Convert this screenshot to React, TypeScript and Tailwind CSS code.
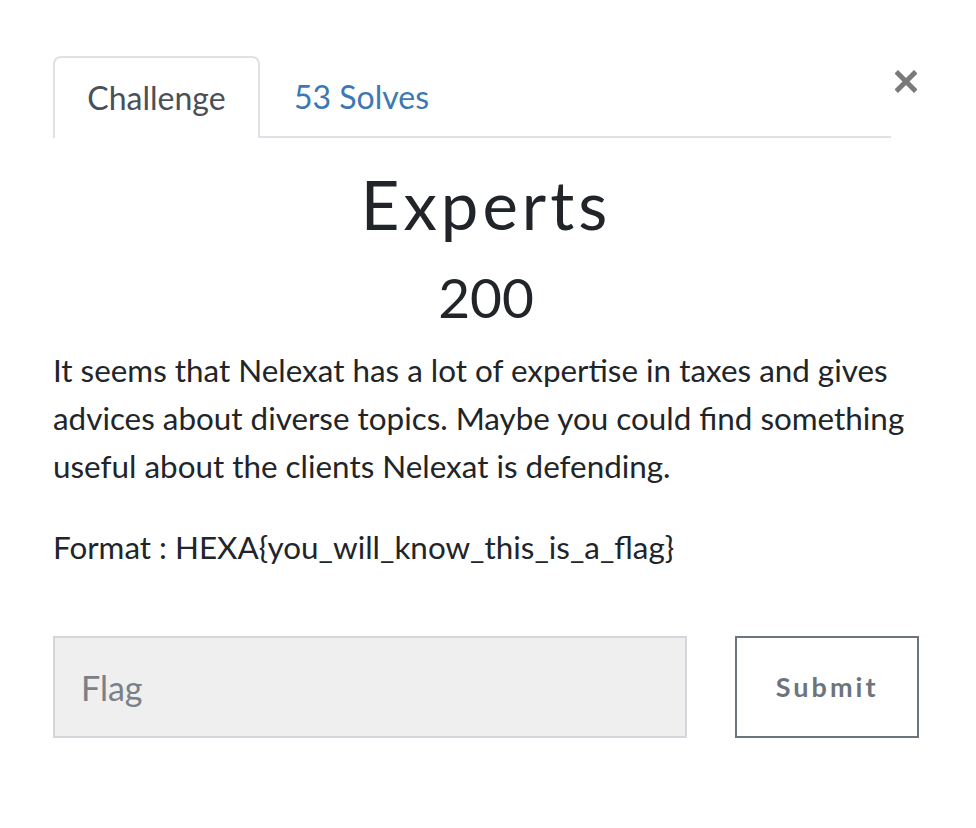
import React from "react";

export default function App() {
  return (
    <div
      className="w-[976px] h-[828px] bg-white text-[#212529]"
      style={{ fontFamily: "Lato, 'Noto Sans', sans-serif" }}
    >
      <div className="pl-[53px] pt-[56px] w-[866px] box-content">
        <div className="flex items-start">
          <div className="flex w-[838px] shrink-0 border-b-2 border-[#dee2e6] h-[82px]">
            <div className="w-[207px] h-[82px] -mb-[2px] border-2 border-b-0 border-[#dee2e6] rounded-t-[8px] bg-white flex items-center justify-center text-[32px] text-[#495057]">
              Challenge
            </div>
            <div className="px-[34px] pt-[2px] flex items-center text-[32px] text-[#3e78b2]">
              53 Solves
            </div>
          </div>
          <svg className="ml-[4px] mt-[14px] shrink-0" width="22" height="23" viewBox="0 0 22 23">
            <path d="M3 3.5 L19 19.5 M19 3.5 L3 19.5" stroke="#7a7a7a" strokeWidth="5" strokeLinecap="square" fill="none" />
          </svg>
        </div>
        <div className="text-center mt-[26px] text-[67px] leading-[80px] tracking-[4px]">
          Experts
        </div>
        <div className="text-center mt-[21px] text-[55px] leading-[64px]">200</div>
        <div className="mt-[17px] text-[31.4px] leading-[48px]">
          It seems that Nelexat has a lot of expertise in taxes and gives advices about diverse topics. Maybe you could find something useful about the clients Nelexat is defending.
        </div>
        <div className="mt-[33px] text-[31.4px] leading-[48px]">
          Format : HEXA{"{"}you_will_know_this_is_a_flag{"}"}
        </div>
        <div className="mt-[65px] flex">
          <input
            placeholder="Flag"
            className="w-[635px] h-[102px] bg-[#efefef] border-2 border-[#d3d7db] px-[26px] text-[34px] text-[#495057] placeholder:text-[#7a8087] outline-none"
          />
          <button className="ml-[48px] w-[184px] h-[102px] border-2 border-[#6c757d] bg-white text-[#6c757d] text-[27px] font-bold tracking-[3px]">
            Submit
          </button>
        </div>
      </div>
    </div>
  );
}
